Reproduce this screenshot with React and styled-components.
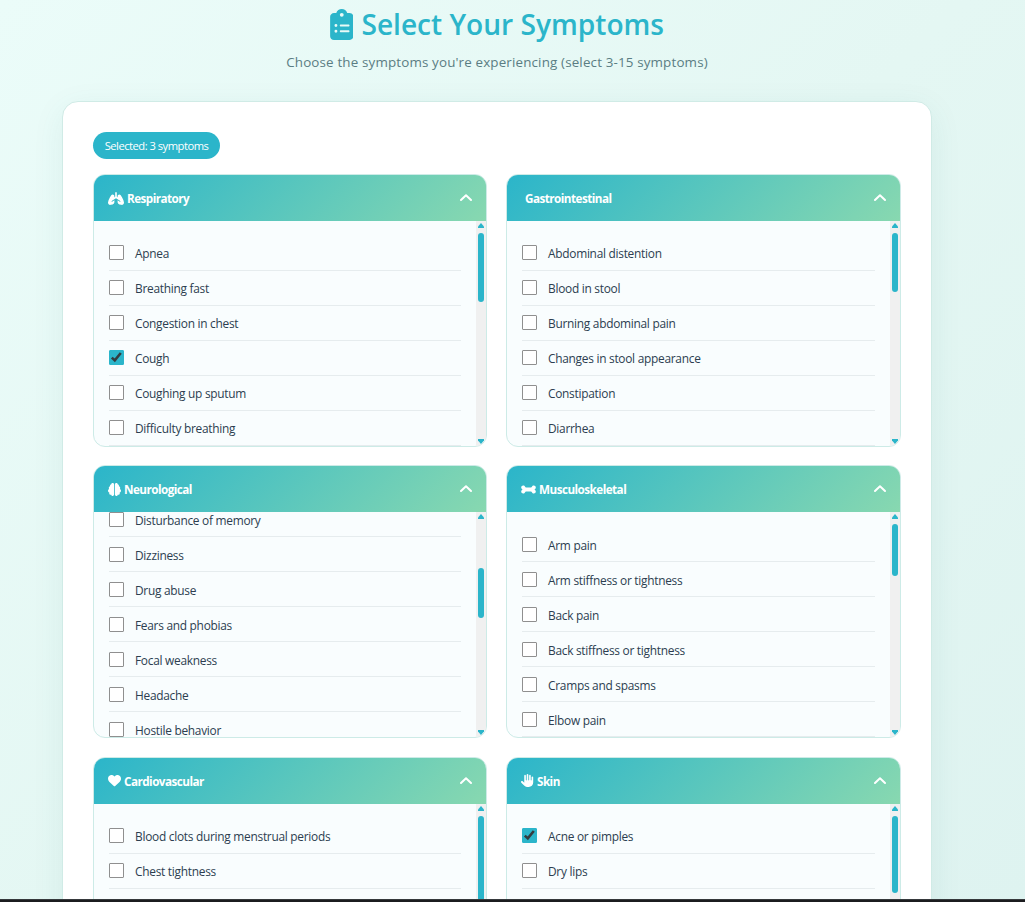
import React from "react";
import styled, { createGlobalStyle } from "styled-components";
import { FaClipboardList, FaLungs, FaBrain, FaBone, FaHeart, FaHand } from "react-icons/fa6";

const GlobalStyle = createGlobalStyle`
  * { box-sizing: border-box; }
  body {
    margin: 0;
    font-family: "Open Sans", "Noto Sans", sans-serif;
    color: #2c3e50;
  }
`;

const Page = styled.div`
  display: flex;
  flex-direction: column;
  height: 902px;
  overflow: hidden;
  background: linear-gradient(135deg, #ebfcf9 0%, #e4f7f3 50%, #def3f0 100%);
`;

const Viewport = styled.main`
  height: 899px;
  flex: none;
  overflow: hidden;
  padding: 4px 93px 0 62px;
`;

const BottomEdge = styled.footer`
  flex: 1;
  background: #1b1c1f;
  border-top: 1px solid #36393c;
`;

const Title = styled.h1`
  display: flex;
  align-items: center;
  justify-content: center;
  gap: 8px;
  margin: 0;
  height: 40px;
  font-size: 28.1px;
  line-height: 38px;
  font-weight: 600;
  letter-spacing: 0;
  color: #2bb5ca;
  svg { width: 23.5px; height: 31px; }
`;

const TitleText = styled.span`
  margin-top: 0;
`;

const Subtitle = styled.p`
  margin: 7px 0 0;
  height: 22px;
  line-height: 22px;
  text-align: center;
  font-size: 13.4px;
  letter-spacing: 0.15px;
  color: #5a7d83;
`;

const Card = styled.section`
  width: 870px;
  height: 900px;
  margin-top: 28px;
  padding: 30px;
  border: 1px solid #d0ebe6;
  border-radius: 16px;
  background: #fff;
  box-shadow: 0 8px 32px rgba(44, 120, 110, 0.08);
`;

const Badge = styled.div`
  width: 127px;
  height: 27px;
  margin-bottom: 15.2px;
  border-radius: 14px;
  background: #2bb5ca;
  color: #fff;
  font-size: 11.2px;
  line-height: 27px;
  letter-spacing: -0.5px;
  text-align: center;
  white-space: nowrap;
`;

const Grid = styled.div`
  display: grid;
  grid-template-columns: 394px 1fr;
  gap: 18.2px 19px;
`;

const Group = styled.article`
  height: 273px;
  border: 1px solid #cdebe7;
  border-radius: 12px;
  overflow: hidden;
  background: #f9fdfe;
`;

const GroupHeader = styled.header`
  display: flex;
  align-items: center;
  height: 46px;
  padding: 0 14.5px 0 14px;
  background: linear-gradient(135deg, #2bb5ca 0%, #88d8b0 100%);
  color: #fff;
`;

const GroupIcon = styled.span`
  display: flex;
  width: ${(p) => p.$width}px;
  margin-right: 3px;
  svg { width: 100%; height: 13px; }
`;

const GroupName = styled.h2`
  flex: 1;
  margin: 0;
  font-size: 11.7px;
  font-weight: 700;
  letter-spacing: -0.53px;
`;

const Chevron = styled.svg`
  width: 12px;
  height: 12px;
`;

const GroupBody = styled.div`
  display: flex;
  height: 225px;
`;

const ListClip = styled.div`
  flex: 1;
  overflow: hidden;
  padding: 0 15px;
`;

const List = styled.ul`
  margin: ${(p) => 15 - p.$scroll}px 0 0;
  padding: 0;
  list-style: none;
`;

const Item = styled.li`
  display: flex;
  align-items: center;
  gap: 11px;
  height: 35px;
  border-bottom: 1px solid #e6ecee;
  font-size: 11.9px;
  letter-spacing: -0.27px;
  white-space: nowrap;
`;

const Label = styled.span`
  padding-top: 0.6px;
`;

const Box = styled.span`
  display: flex;
  flex: none;
  width: 15px;
  height: 15px;
  margin-top: -0.5px;
  border: 1px solid ${(p) => (p.$checked ? "#2bb5ca" : "#8f8f8f")};
  border-radius: 1px;
  background: ${(p) => (p.$checked ? "#2bb5ca" : "#fff")};
  svg { width: 13px; height: 13px; }
`;

const Track = styled.div`
  display: flex;
  flex-direction: column;
  align-items: center;
  width: 10px;
  background: #f0f0f0;
  svg { width: 6px; height: 5px; flex: none; margin: 2px 0 4px; }
  svg:last-child { margin: 3px 0 2px; }
`;

const ThumbArea = styled.div`
  flex: 1;
  padding-top: ${(p) => p.$start}px;
`;

const Thumb = styled.div`
  width: 6px;
  height: ${(p) => p.$size}px;
  border-radius: 3px;
  background: #2bb5ca;
`;

const GROUPS = [
  {
    name: "Respiratory", Icon: FaLungs, width: 16, start: 1, size: 69, checked: ["Cough"],
    items: ["Apnea", "Breathing fast", "Congestion in chest", "Cough", "Coughing up sputum", "Difficulty breathing"],
  },
  {
    name: "Gastrointestinal", width: 1, start: 1, size: 59,
    items: ["Abdominal distention", "Blood in stool", "Burning abdominal pain", "Changes in stool appearance", "Constipation", "Diarrhea"],
  },
  {
    name: "Neurological", Icon: FaBrain, width: 13, start: 45, size: 50, scroll: 25,
    items: ["Disturbance of memory", "Dizziness", "Drug abuse", "Fears and phobias", "Focal weakness", "Headache", "Hostile behavior"],
  },
  {
    name: "Musculoskeletal", Icon: FaBone, width: 15, start: 1, size: 52,
    items: ["Arm pain", "Arm stiffness or tightness", "Back pain", "Back stiffness or tightness", "Cramps and spasms", "Elbow pain"],
  },
  {
    name: "Cardiovascular", Icon: FaHeart, width: 13, start: 1, size: 120,
    items: ["Blood clots during menstrual periods", "Chest tightness"],
  },
  {
    name: "Skin", Icon: FaHand, width: 13, start: 1, size: 77, checked: ["Acne or pimples"],
    items: ["Acne or pimples", "Dry lips"],
  },
];

function SymptomGroup({ name, Icon, width, start, size, scroll = 0, items, checked = [] }) {
  return (
    <Group>
      <GroupHeader>
        <GroupIcon $width={width}>{Icon && <Icon />}</GroupIcon>
        <GroupName>{name}</GroupName>
        <Chevron viewBox="0 0 12 12" fill="none" stroke="#fff" strokeWidth="2" strokeLinecap="round" strokeLinejoin="round">
          <path d="M1 8 6 3.2 11 8" />
        </Chevron>
      </GroupHeader>
      <GroupBody>
        <ListClip>
          <List $scroll={scroll}>
            {items.map((item) => (
              <Item key={item}>
                <Box $checked={checked.includes(item)}>
                  {checked.includes(item) && (
                    <svg viewBox="0 0 13 13" fill="none" stroke="#333c40" strokeWidth="2.6">
                      <path d="M1.8 6.6 4.8 9.4l6-7.4" />
                    </svg>
                  )}
                </Box>
                <Label>{item}</Label>
              </Item>
            ))}
          </List>
        </ListClip>
        <Track>
          <svg viewBox="0 0 6 5" fill="#2bb5ca"><path d="M3 0 6 3.5V5H0V3.5z" /></svg>
          <ThumbArea $start={start}><Thumb $size={size} /></ThumbArea>
          <svg viewBox="0 0 6 5" fill="#2bb5ca"><path d="M3 5 6 1.5V0H0v1.5z" /></svg>
        </Track>
      </GroupBody>
    </Group>
  );
}

export default function App() {
  return (
    <Page>
      <GlobalStyle />
      <Viewport>
        <Title><FaClipboardList /><TitleText>Select Your Symptoms</TitleText></Title>
        <Subtitle>Choose the symptoms you're experiencing (select 3-15 symptoms)</Subtitle>
        <Card>
          <Badge>Selected: 3 symptoms</Badge>
          <Grid>
            {GROUPS.map((group) => <SymptomGroup key={group.name} {...group} />)}
          </Grid>
        </Card>
      </Viewport>
      <BottomEdge />
    </Page>
  );
}
